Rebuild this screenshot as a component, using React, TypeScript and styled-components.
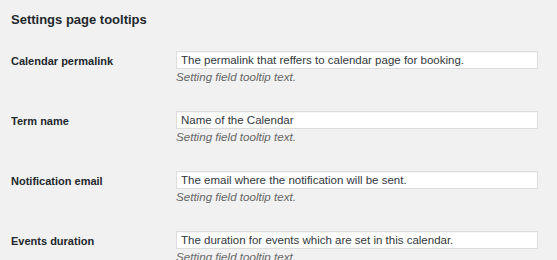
import styled, {createGlobalStyle} from "styled-components";

const GlobalStyle = createGlobalStyle`
  html, body {
    margin: 0;
    padding: 0;
    background: #f1f1f1;
  }
  body {
    font-family: "Liberation Sans", Arial, sans-serif;
    color: #23282d;
  }
`;

const Wrapper = styled.div`
  padding: 12px 0 0 11px;
  height: 248px;
  overflow: hidden;
`;
const Title = styled.h2`
  margin: 0 0 23px;
  font-size: 13px;
  line-height: 16px;
  font-weight: 700;
  color: #23282d;
`;
const FormTable = styled.div`
  display: flex;
  flex-direction: column;
  gap: 27px;
`;
const Row = styled.div`
  display: flex;
  align-items: flex-start;
`;
const Label = styled.label`
  width: 165px;
  flex: none;
  padding-top: 3px;
  font-size: 11px;
  line-height: 14px;
  font-weight: 700;
  color: #23282d;
`;
const Field = styled.div`
  display: flex;
  flex-direction: column;
`;
const TextInput = styled.input`
  box-sizing: border-box;
  width: 362px;
  height: 18px;
  margin: 0;
  padding: 0 4px;
  border: 1px solid #dddddd;
  border-radius: 0;
  background: #ffffff;
  box-shadow: inset 0 1px 1px rgba(0, 0, 0, 0.04);
  font-family: "Liberation Sans", Arial, sans-serif;
  font-size: 11.5px;
  color: #32373c;
  outline: none;
`;
const Description = styled.p`
  margin: 1px 0 0;
  font-size: 11.6px;
  line-height: 14px;
  font-style: italic;
  color: #666666;
`;

interface ISetting {
    id: string,
    label: string,
    value: string
}

const settings: ISetting[] = [
    {id: "calendar_permalink", label: "Calendar permalink", value: "The permalink that reffers to calendar page for booking."},
    {id: "term_name", label: "Term name", value: "Name of the Calendar"},
    {id: "notification_email", label: "Notification email", value: "The email where the notification will be sent."},
    {id: "events_duration", label: "Events duration", value: "The duration for events which are set in this calendar."},
];

function App() {
    return (
        <Wrapper>
            <GlobalStyle/>
            <Title>Settings page tooltips</Title>
            <FormTable>
                {settings.map(s =>
                    <Row key={s.id}>
                        <Label htmlFor={s.id}>{s.label}</Label>
                        <Field>
                            <TextInput id={s.id} type="text" defaultValue={s.value}/>
                            <Description>Setting field tooltip text.</Description>
                        </Field>
                    </Row>
                )}
            </FormTable>
        </Wrapper>
    );
}

export default App;
